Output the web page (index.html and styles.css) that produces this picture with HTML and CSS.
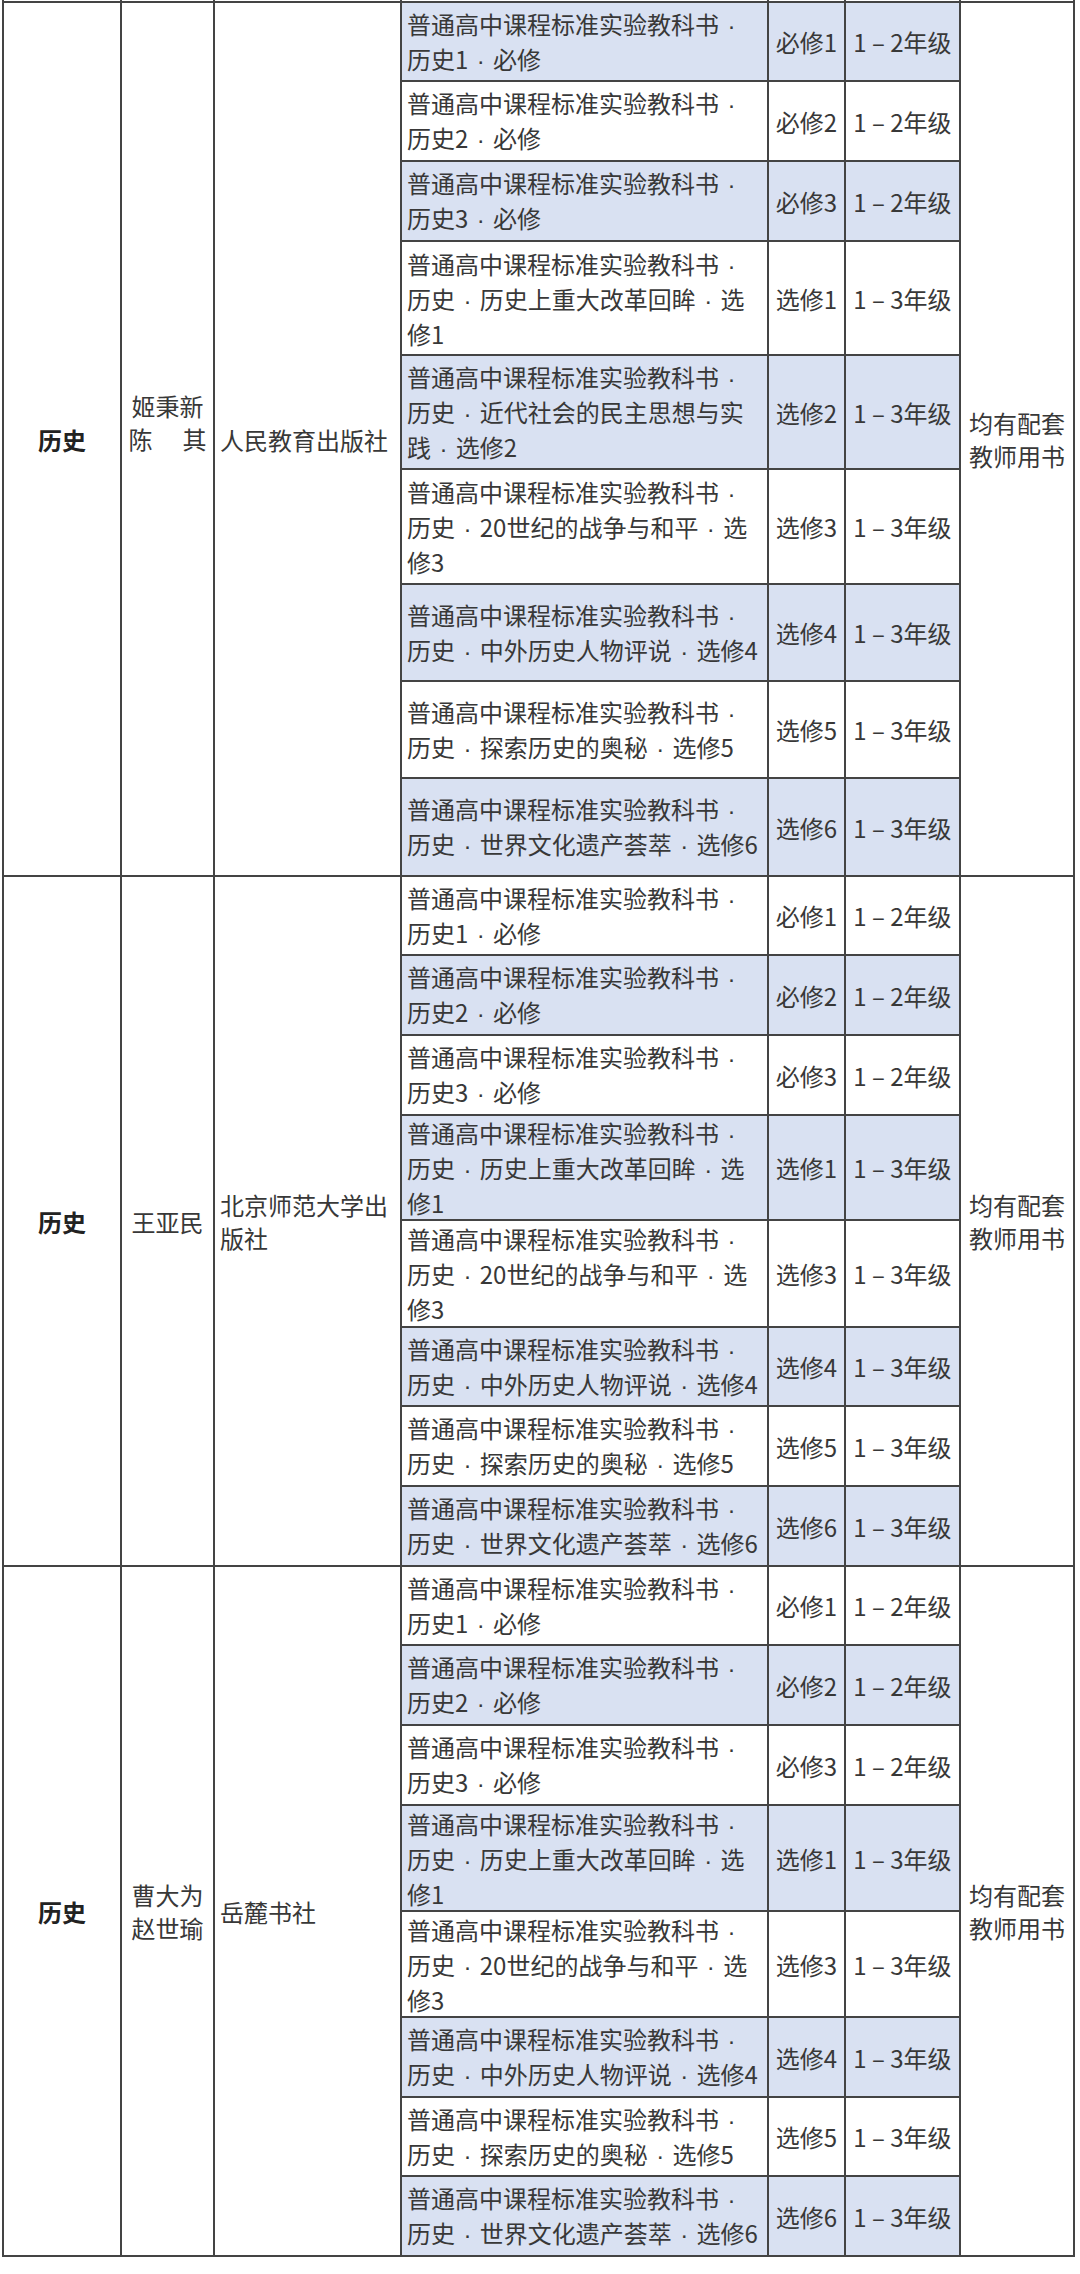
FILE: index.html
```html
<!DOCTYPE html>
<html lang="zh-CN">
<head>
<meta charset="utf-8">
<title>普通高中课程标准实验教科书 · 历史</title>
<link rel="stylesheet" href="styles.css">
</head>
<body>
<div class="page">
<table class="tbl">
<colgroup>
<col class="c-sub"><col class="c-auth"><col class="c-pub"><col class="c-book"><col class="c-type"><col class="c-grade"><col class="c-note">
</colgroup>
<tbody>
<tr class="stub"><td></td><td></td><td></td><td></td><td></td><td></td><td></td></tr>

<!-- group 1 -->
<tr class="h79 alt">
<td rowspan="9" class="sub">历史</td>
<td rowspan="9" class="auth a1">姬秉新<span class="just"><span>陈</span><span>其</span></span></td>
<td rowspan="9" class="pub">人民教育出版社</td>
<td class="book">普通高中课程标准实验教科书 <span class="sep">·</span> 历史1 <span class="sep">·</span> 必修</td>
<td class="type">必修1</td><td class="grade">1 – 2年级</td>
<td rowspan="9" class="note">均有配套<br>教师用书</td>
</tr>
<tr class="h80"><td class="book">普通高中课程标准实验教科书 <span class="sep">·</span> 历史2 <span class="sep">·</span> 必修</td><td class="type">必修2</td><td class="grade">1 – 2年级</td></tr>
<tr class="h80 alt"><td class="book">普通高中课程标准实验教科书 <span class="sep">·</span> 历史3 <span class="sep">·</span> 必修</td><td class="type">必修3</td><td class="grade">1 – 2年级</td></tr>
<tr class="h114"><td class="book">普通高中课程标准实验教科书 <span class="sep">·</span> 历史 <span class="sep">·</span> 历史上重大改革回眸 <span class="sep">·</span> 选修1</td><td class="type">选修1</td><td class="grade">1 – 3年级</td></tr>
<tr class="h114 alt"><td class="book">普通高中课程标准实验教科书 <span class="sep">·</span> 历史 <span class="sep">·</span> 近代社会的民主思想与实践 <span class="sep">·</span> 选修2</td><td class="type">选修2</td><td class="grade">1 – 3年级</td></tr>
<tr class="h115"><td class="book">普通高中课程标准实验教科书 <span class="sep">·</span> 历史 <span class="sep">·</span> 20世纪的战争与和平 <span class="sep">·</span> 选修3</td><td class="type">选修3</td><td class="grade">1 – 3年级</td></tr>
<tr class="h97 alt"><td class="book">普通高中课程标准实验教科书 <span class="sep">·</span> 历史 <span class="sep">·</span> 中外历史人物评说 <span class="sep">·</span> 选修4</td><td class="type">选修4</td><td class="grade">1 – 3年级</td></tr>
<tr class="h97"><td class="book">普通高中课程标准实验教科书 <span class="sep">·</span> 历史 <span class="sep">·</span> 探索历史的奥秘 <span class="sep">·</span> 选修5</td><td class="type">选修5</td><td class="grade">1 – 3年级</td></tr>
<tr class="h98 alt"><td class="book">普通高中课程标准实验教科书 <span class="sep">·</span> 历史 <span class="sep">·</span> 世界文化遗产荟萃 <span class="sep">·</span> 选修6</td><td class="type">选修6</td><td class="grade">1 – 3年级</td></tr>

<!-- group 2 -->
<tr class="h79">
<td rowspan="8" class="sub">历史</td>
<td rowspan="8" class="auth">王亚民</td>
<td rowspan="8" class="pub">北京师范大学出版社</td>
<td class="book">普通高中课程标准实验教科书 <span class="sep">·</span> 历史1 <span class="sep">·</span> 必修</td>
<td class="type">必修1</td><td class="grade">1 – 2年级</td>
<td rowspan="8" class="note">均有配套<br>教师用书</td>
</tr>
<tr class="h80 alt"><td class="book">普通高中课程标准实验教科书 <span class="sep">·</span> 历史2 <span class="sep">·</span> 必修</td><td class="type">必修2</td><td class="grade">1 – 2年级</td></tr>
<tr class="h80"><td class="book">普通高中课程标准实验教科书 <span class="sep">·</span> 历史3 <span class="sep">·</span> 必修</td><td class="type">必修3</td><td class="grade">1 – 2年级</td></tr>
<tr class="h105 alt"><td class="book">普通高中课程标准实验教科书 <span class="sep">·</span> 历史 <span class="sep">·</span> 历史上重大改革回眸 <span class="sep">·</span> 选修1</td><td class="type">选修1</td><td class="grade">1 – 3年级</td></tr>
<tr class="h107"><td class="book">普通高中课程标准实验教科书 <span class="sep">·</span> 历史 <span class="sep">·</span> 20世纪的战争与和平 <span class="sep">·</span> 选修3</td><td class="type">选修3</td><td class="grade">1 – 3年级</td></tr>
<tr class="h79 alt"><td class="book">普通高中课程标准实验教科书 <span class="sep">·</span> 历史 <span class="sep">·</span> 中外历史人物评说 <span class="sep">·</span> 选修4</td><td class="type">选修4</td><td class="grade">1 – 3年级</td></tr>
<tr class="h80"><td class="book">普通高中课程标准实验教科书 <span class="sep">·</span> 历史 <span class="sep">·</span> 探索历史的奥秘 <span class="sep">·</span> 选修5</td><td class="type">选修5</td><td class="grade">1 – 3年级</td></tr>
<tr class="h80 alt"><td class="book">普通高中课程标准实验教科书 <span class="sep">·</span> 历史 <span class="sep">·</span> 世界文化遗产荟萃 <span class="sep">·</span> 选修6</td><td class="type">选修6</td><td class="grade">1 – 3年级</td></tr>

<!-- group 3 -->
<tr class="h79">
<td rowspan="8" class="sub">历史</td>
<td rowspan="8" class="auth">曹大为<br>赵世瑜</td>
<td rowspan="8" class="pub">岳麓书社</td>
<td class="book">普通高中课程标准实验教科书 <span class="sep">·</span> 历史1 <span class="sep">·</span> 必修</td>
<td class="type">必修1</td><td class="grade">1 – 2年级</td>
<td rowspan="8" class="note">均有配套<br>教师用书</td>
</tr>
<tr class="h80 alt"><td class="book">普通高中课程标准实验教科书 <span class="sep">·</span> 历史2 <span class="sep">·</span> 必修</td><td class="type">必修2</td><td class="grade">1 – 2年级</td></tr>
<tr class="h80"><td class="book">普通高中课程标准实验教科书 <span class="sep">·</span> 历史3 <span class="sep">·</span> 必修</td><td class="type">必修3</td><td class="grade">1 – 2年级</td></tr>
<tr class="h106 alt"><td class="book">普通高中课程标准实验教科书 <span class="sep">·</span> 历史 <span class="sep">·</span> 历史上重大改革回眸 <span class="sep">·</span> 选修1</td><td class="type">选修1</td><td class="grade">1 – 3年级</td></tr>
<tr class="h106"><td class="book">普通高中课程标准实验教科书 <span class="sep">·</span> 历史 <span class="sep">·</span> 20世纪的战争与和平 <span class="sep">·</span> 选修3</td><td class="type">选修3</td><td class="grade">1 – 3年级</td></tr>
<tr class="h80 alt"><td class="book">普通高中课程标准实验教科书 <span class="sep">·</span> 历史 <span class="sep">·</span> 中外历史人物评说 <span class="sep">·</span> 选修4</td><td class="type">选修4</td><td class="grade">1 – 3年级</td></tr>
<tr class="h79"><td class="book">普通高中课程标准实验教科书 <span class="sep">·</span> 历史 <span class="sep">·</span> 探索历史的奥秘 <span class="sep">·</span> 选修5</td><td class="type">选修5</td><td class="grade">1 – 3年级</td></tr>
<tr class="h80 alt"><td class="book">普通高中课程标准实验教科书 <span class="sep">·</span> 历史 <span class="sep">·</span> 世界文化遗产荟萃 <span class="sep">·</span> 选修6</td><td class="type">选修6</td><td class="grade">1 – 3年级</td></tr>
</tbody>
</table>
</div>
</body>
</html>
```

FILE: styles.css
```css
html, body {
  margin: 0;
  padding: 0;
  background: #ffffff;
}

body {
  font-family: "Noto Sans CJK SC", "Noto Sans", sans-serif;
  font-size: 24px;
  color: #383838;
}

.page {
  padding-left: 2px;
}

.tbl {
  border-collapse: collapse;
  table-layout: fixed;
  width: 1073px;
}

.c-sub { width: 118px; }
.c-auth { width: 93px; }
.c-pub { width: 187px; }
.c-book { width: 367px; }
.c-type { width: 77px; }
.c-grade { width: 115px; }
.c-note { width: 114px; }

.tbl td {
  border: 2px solid #444444;
  padding: 0;
  vertical-align: middle;
  line-height: 33px;
  background: #ffffff;
}

.stub td {
  height: 1px;
  border-top: 0;
  font-size: 0;
  line-height: 0;
}

.h79 { height: 79px; }
.h80 { height: 80px; }
.h97 { height: 97px; }
.h98 { height: 98px; }
.h105 { height: 105px; }
.h106 { height: 106px; }
.h107 { height: 107px; }
.h114 { height: 114px; }
.h115 { height: 115px; }

.alt .book,
.alt .type,
.alt .grade {
  background: #d9e1f2;
}

.sub {
  text-align: center;
  font-weight: 700;
  color: #222222;
}

.auth {
  text-align: center;
  line-height: 34px;
}

.a1 {
  padding-bottom: 34px !important;
}

.just {
  display: flex;
  justify-content: space-between;
  width: 78px;
  margin: 0 auto;
}

.pub {
  text-align: left;
  padding: 0 4px 0 5px !important;
  line-height: 34px;
}

.book {
  text-align: left;
  padding: 0 4px 0 5px !important;
}

.sep {
  display: inline-block;
  width: 14px;
  text-align: center;
  font-family: "Liberation Sans", "Noto Sans", sans-serif;
}

.type,
.grade {
  text-align: center;
  white-space: nowrap;
}

.note {
  text-align: center;
  line-height: 34px;
}
```
